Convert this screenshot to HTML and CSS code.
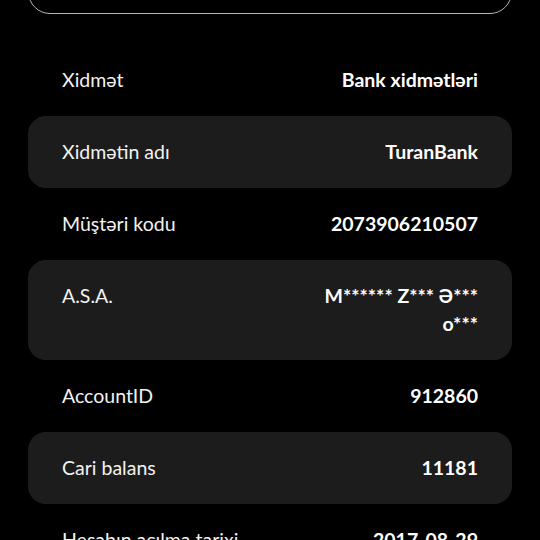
FILE: index.html
```html
<!DOCTYPE html>
<html lang="az">
<head>
    <meta charset="UTF-8">
    <meta name="viewport" content="width=device-width, initial-scale=1.0">
    <title>Ödəniş təfərrüatları</title>
    <link rel="stylesheet" href="styles.css">
</head>
<body>
    <div class="page">
        <div class="search-box"></div>

        <div class="details">
            <div class="row">
                <div class="label">Xidmət</div>
                <div class="value">Bank xidmətləri</div>
            </div>
            <div class="row card">
                <div class="label">Xidmətin adı</div>
                <div class="value">TuranBank</div>
            </div>
            <div class="row">
                <div class="label">Müştəri kodu</div>
                <div class="value">2073906210507</div>
            </div>
            <div class="row card">
                <div class="label">A.S.A.</div>
                <div class="value">M****** Z*** Ə*** o***</div>
            </div>
            <div class="row">
                <div class="label">AccountID</div>
                <div class="value">912860</div>
            </div>
            <div class="row card">
                <div class="label">Cari balans</div>
                <div class="value">11181</div>
            </div>
            <div class="row">
                <div class="label">Hesabın açılma tarixi</div>
                <div class="value">2017-08-29</div>
            </div>
        </div>
    </div>
</body>
</html>
```

FILE: styles.css
```css
body {
    margin: 0;
    background-color: #000;
    color: #fff;
    font-family: Lato, "Noto Sans", sans-serif;
    overflow: hidden;
}
.page {
    padding: 0 28px;
}
.search-box {
    height: 56px;
    margin-top: -42px;
    border: 1.5px solid #b5b5b5;
    border-radius: 22px;
    box-sizing: border-box;
}
.details {
    margin-top: 30px;
    display: flex;
    flex-direction: column;
}
.row {
    display: flex;
    justify-content: space-between;
    align-items: flex-start;
    gap: 16px;
    padding: 22px 34px;
    font-size: 19.5px;
    line-height: 28px;
}
.card {
    background-color: #1c1c1c;
    border-radius: 18px;
}
.label {
    flex: 1;
    color: #f2f2f2;
}
.value {
    max-width: 42%;
    text-align: right;
    font-weight: 700;
}
```
